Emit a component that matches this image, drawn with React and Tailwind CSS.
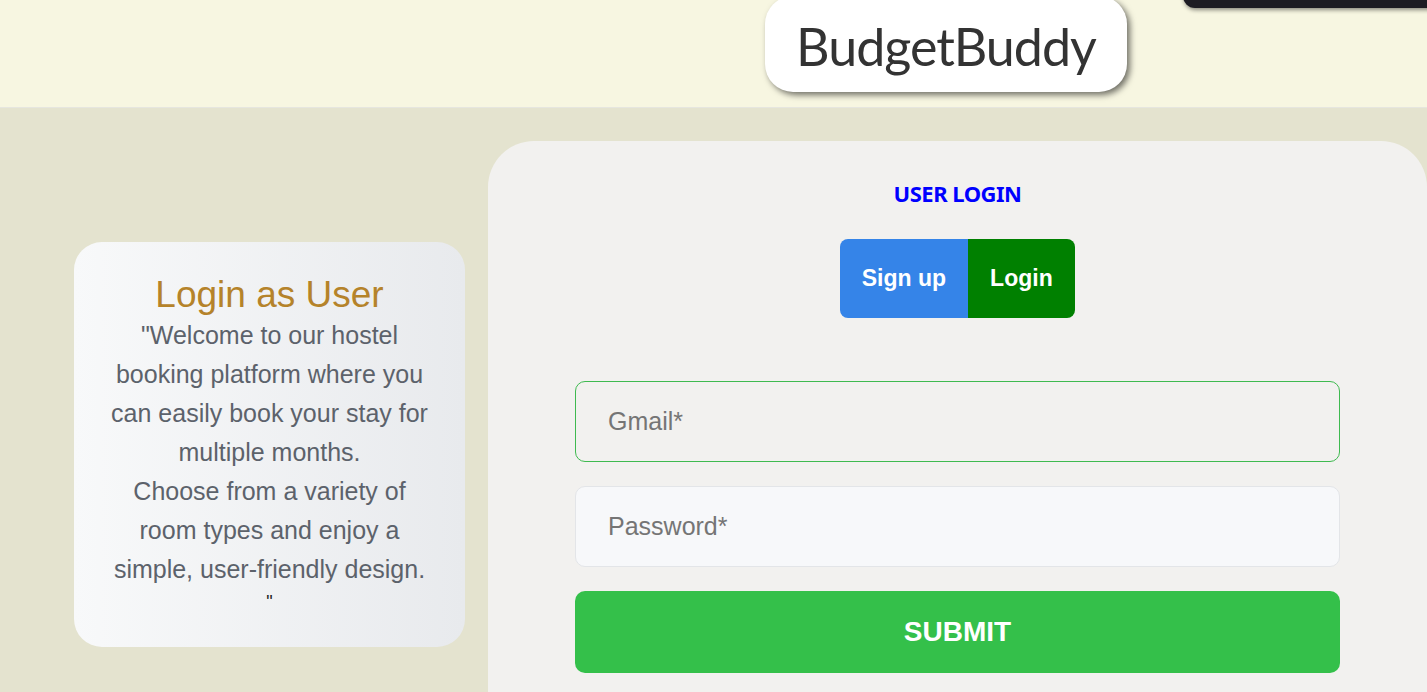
export default function App() {
  return (
    <div className="relative h-[692px] w-full overflow-hidden bg-[#e4e3cf] font-['Liberation_Sans',Arial,sans-serif]">
      {/* header */}
      <header className="flex h-[108px] items-start border-b border-[#e6e6df] bg-[#f7f6e1]">
        <div className="ml-[765px] mt-[-4px] flex h-[96px] w-[362px] items-center justify-center rounded-[28px] bg-white shadow-[3px_3px_6px_rgba(0,0,0,0.55)]">
          <span className="pt-[4px] font-['Lato','Open_Sans',sans-serif] text-[52px] leading-none tracking-[-1px] text-[#333333]">
            BudgetBuddy
          </span>
        </div>
      </header>
      {/* overlay widget at top right */}
      <div className="absolute right-[-20px] top-[-20px] h-[28px] w-[264px] rounded-bl-[12px] bg-[#1d1c23] shadow-[1px_2px_4px_rgba(0,0,0,0.45)]" />

      {/* main */}
      <main className="flex items-start gap-[23px] pl-[74px] pt-[33px]">
        <section className="mt-[101px] w-[391px] rounded-[28px] bg-gradient-to-r from-[#f8f9fa] to-[#e8eaed] px-[33px] pb-[35px] pt-[31px] text-center">
          <h2 className="text-[37px] leading-[43px] text-[#b5832a]">Login as User</h2>
          <p className="text-[25px] leading-[39px] text-[#5c626b]">
            "Welcome to our hostel booking platform where you can easily book your stay for multiple months.
            <br />
            Choose from a variety of room types and enjoy a simple, user-friendly design.
          </p>
          <div className="mt-[3px] text-[18px] leading-[20px] text-[#222]">"</div>
        </section>

        <section className="flex h-[640px] w-[939px] flex-col items-center rounded-t-[46px] bg-[#f2f1ef]">
          <h1 className="mt-[37px] font-['Noto_Sans',sans-serif] text-[22px] font-bold leading-[30px] tracking-[-0.5px] text-[#0000ff]">
            USER LOGIN
          </h1>
          <div className="mt-[31px] flex h-[79px] overflow-hidden rounded-[8px] text-[23px] font-bold text-white">
            <button className="flex items-center bg-[#3584e8] pl-[22px] pr-[21.5px]">Sign up</button>
            <button className="flex items-center bg-[#008000] px-[22.5px]">Login</button>
          </div>
          <div className="mt-[63px] flex w-[765px] flex-col gap-[24px]">
            <input
              placeholder="Gmail*"
              className="h-[81px] w-full rounded-[10px] border border-[#3fba50] bg-transparent px-[32px] text-[25px] text-[#333] outline-none placeholder:text-[#757575]"
            />
            <input
              placeholder="Password*"
              type="password"
              className="h-[81px] w-full rounded-[10px] border border-[#e3e5e8] bg-[#f7f8fa] px-[32px] text-[25px] text-[#333] outline-none placeholder:text-[#757575]"
            />
            <button className="h-[82px] w-full rounded-[10px] bg-[#34c04a] text-[28px] font-bold text-white">
              SUBMIT
            </button>
          </div>
        </section>
      </main>
    </div>
  );
}
